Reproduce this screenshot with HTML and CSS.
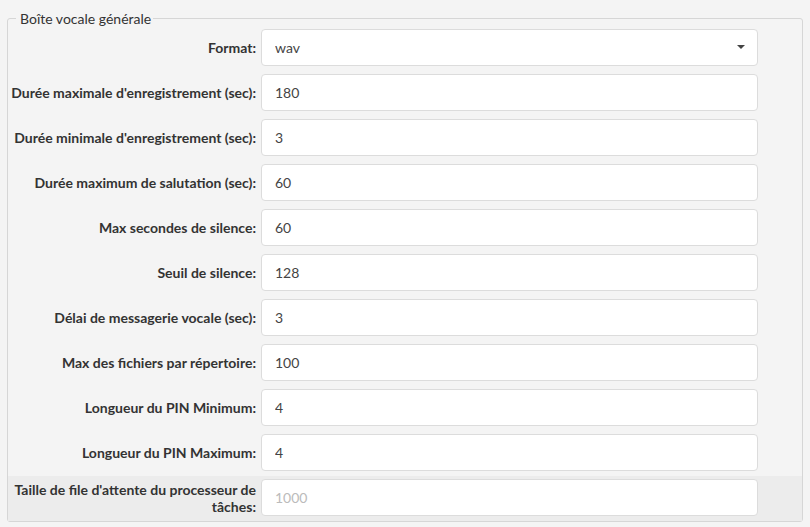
FILE: index.html
```html
<!DOCTYPE html>
<html lang="fr">
<head>
    <meta charset="UTF-8">
    <meta name="viewport" content="width=device-width, initial-scale=1.0">
    <title>Messagerie vocale</title>
    <link rel="stylesheet" href="styles.css">
</head>
<body>
    <div class="page">
        <fieldset class="settings">
            <legend>Boîte vocale générale</legend>

            <div class="row">
                <label for="vm-format">Format:</label>
                <div class="select">
                    <select id="vm-format">
                        <option>wav</option>
                        <option>gsm</option>
                        <option>wav49</option>
                    </select>
                    <span class="caret"></span>
                </div>
            </div>

            <div class="row">
                <label for="vm-maxmsg">Durée maximale d'enregistrement (sec):</label>
                <input type="text" id="vm-maxmsg" value="180">
            </div>

            <div class="row">
                <label for="vm-minmsg">Durée minimale d'enregistrement (sec):</label>
                <input type="text" id="vm-minmsg" value="3">
            </div>

            <div class="row">
                <label for="vm-maxgreet">Durée maximum de salutation (sec):</label>
                <input type="text" id="vm-maxgreet" value="60">
            </div>

            <div class="row">
                <label for="vm-maxsilence">Max secondes de silence:</label>
                <input type="text" id="vm-maxsilence" value="60">
            </div>

            <div class="row">
                <label for="vm-silence">Seuil de silence:</label>
                <input type="text" id="vm-silence" value="128">
            </div>

            <div class="row">
                <label for="vm-delay">Délai de messagerie vocale (sec):</label>
                <input type="text" id="vm-delay" value="3">
            </div>

            <div class="row">
                <label for="vm-maxfiles">Max des fichiers par répertoire:</label>
                <input type="text" id="vm-maxfiles" value="100">
            </div>

            <div class="row">
                <label for="vm-pinmin">Longueur du PIN Minimum:</label>
                <input type="text" id="vm-pinmin" value="4">
            </div>

            <div class="row">
                <label for="vm-pinmax">Longueur du PIN Maximum:</label>
                <input type="text" id="vm-pinmax" value="4">
            </div>

            <div class="row active">
                <label for="vm-queue">Taille de file d'attente du processeur de tâches:</label>
                <input type="text" id="vm-queue" placeholder="1000">
            </div>
        </fieldset>
    </div>
</body>
</html>
```

FILE: styles.css
```css
body {
    margin: 0;
    padding: 0;
    background-color: #fafafa;
    font-family: Lato, "Open Sans", sans-serif;
    color: #333;
}

.page {
    background-color: #f4f4f4;
    padding: 10px 7px 6px 7px;
}

.settings {
    margin: 0;
    padding: 0;
    border: 1px solid #d6d6d6;
    border-radius: 3px;
    min-width: 0;
}

.settings legend {
    margin-left: 8px;
    padding: 0 2px 0 4px;
    font-size: 14px;
    color: #333;
}

.row {
    display: grid;
    grid-template-columns: 253px 497px;
    align-items: center;
    padding: 3px 0 5px 0;
}

legend + .row {
    padding-top: 2px;
}

.row.active {
    background-color: #ececec;
}

.row label {
    text-align: right;
    font-size: 14px;
    font-weight: bold;
    line-height: 17px;
    padding: 0 5px 0 0;
}

.row input,
.row select {
    box-sizing: border-box;
    width: 100%;
    height: 37px;
    margin: 0;
    padding: 0 13px;
    border: 1px solid #dcdcdc;
    border-radius: 4px;
    background-color: #fff;
    font-family: Lato, "Open Sans", sans-serif;
    font-size: 14px;
    color: #444;
    outline: none;
}

.row input::placeholder {
    color: #bbb;
}

.select {
    position: relative;
}

.select select {
    appearance: none;
    -webkit-appearance: none;
}

.select .caret {
    position: absolute;
    right: 13px;
    top: 16px;
    width: 0;
    height: 0;
    border-left: 4px solid transparent;
    border-right: 4px solid transparent;
    border-top: 4px solid #444;
    pointer-events: none;
}
```
